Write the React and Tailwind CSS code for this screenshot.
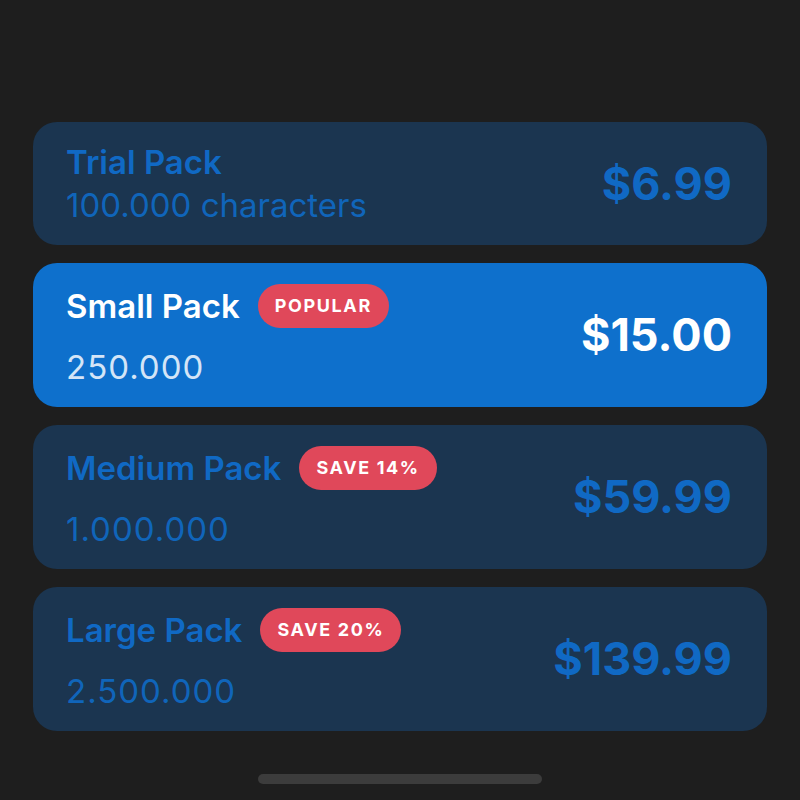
import React from 'react';

const packs = [
  { name: 'Trial Pack', amount: '100.000 characters', price: '$6.99' },
  { name: 'Small Pack', amount: '250.000', price: '$15.00', badge: 'POPULAR', selected: true },
  { name: 'Medium Pack', amount: '1.000.000', price: '$59.99', badge: 'SAVE 14%' },
  { name: 'Large Pack', amount: '2.500.000', price: '$139.99', badge: 'SAVE 20%' },
];

const PackCard = ({ pack }) => {
  const selected = pack.selected;
  return (
    <div
      className={`flex items-center justify-between rounded-[24px] pl-[33px] pr-[35px] ${
        selected ? 'bg-[#0e70cc]' : 'bg-[#1b3550]'
      } ${pack.badge ? 'h-[144px]' : 'h-[123px]'}`}
    >
      <div className="flex flex-col">
        <div className="flex items-center gap-[18px]">
          <span
            className={`text-[33px] font-semibold leading-[40px] ${
              selected ? 'text-white' : 'text-[#1069c4]'
            }`}
          >
            {pack.name}
          </span>
          {pack.badge && (
            <span className="flex h-[44px] items-center rounded-full bg-[#e0485a] px-[17px] text-[18px] font-bold tracking-[0.09em] text-white">
              {pack.badge}
            </span>
          )}
        </div>
        {/* plain numbers run a little wide in the original font */}
        <span
          className={`text-[33px] leading-[40px] ${
            pack.badge ? 'mt-[19px] tracking-[1px]' : 'mt-[3px]'
          } ${selected ? 'text-[#d4e5f7]' : 'text-[#1065ba]'}`}
        >
          {pack.amount}
        </span>
      </div>
      <span
        className={`text-[45px] font-bold ${selected ? 'text-white' : 'text-[#1069c4]'}`}
      >
        {pack.price}
      </span>
    </div>
  );
};

const App = () => {
  return (
    <div
      className="flex h-[800px] w-[800px] flex-col bg-[#1e1e1e] px-[33px]"
      style={{ fontFamily: 'Inter, "Noto Sans", sans-serif' }}
    >
      <div className="mt-[122px] flex flex-col gap-[18px]">
        {packs.map((pack) => (
          <PackCard key={pack.name} pack={pack} />
        ))}
      </div>
      <div className="mt-auto mb-[16px] flex justify-center">
        <div className="h-[10px] w-[284px] rounded-full bg-[#3c3c3c]" />
      </div>
    </div>
  );
};

export default App;
